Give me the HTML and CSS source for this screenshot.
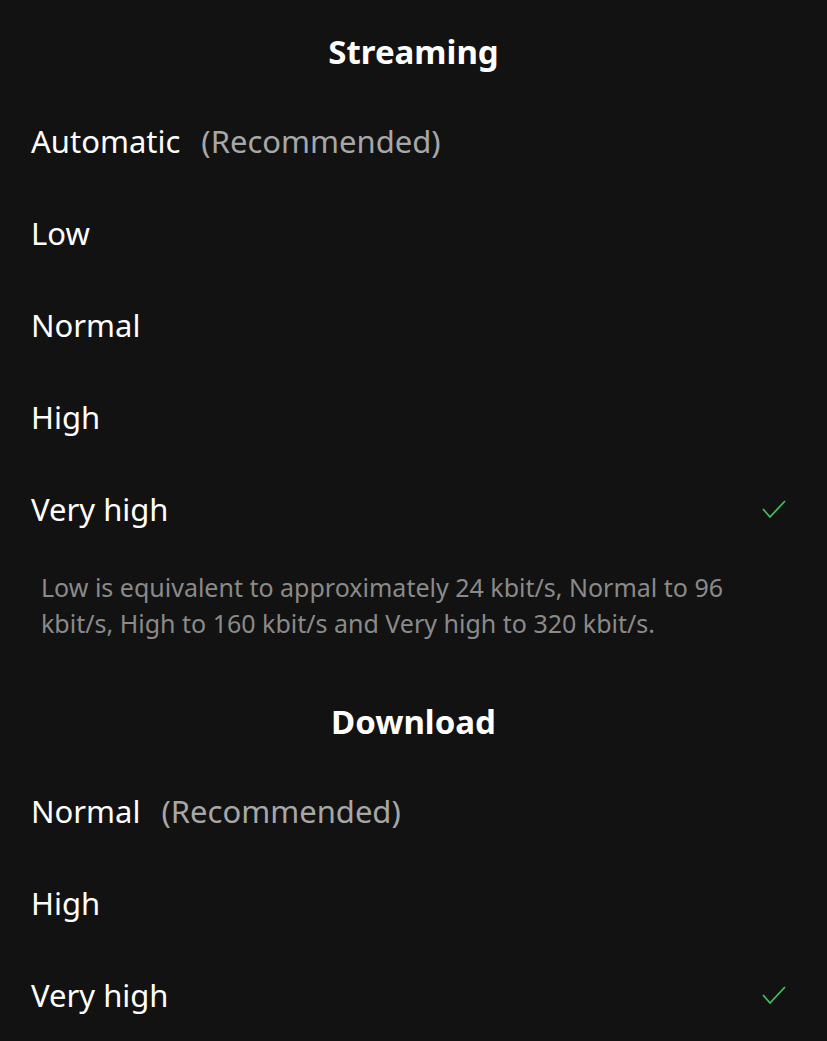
FILE: index.html
```html
<!DOCTYPE html>
<html lang="en">
<head>
<meta charset="UTF-8">
<meta name="viewport" content="width=device-width, initial-scale=1.0">
<title>Audio Quality</title>
<link rel="stylesheet" href="styles.css">
</head>
<body>
<div class="settings">
    <h2 class="section-title">Streaming</h2>
    <ul class="options">
        <li class="option">Automatic <span class="hint">(Recommended)</span></li>
        <li class="option">Low</li>
        <li class="option">Normal</li>
        <li class="option">High</li>
        <li class="option selected">Very high
            <svg class="check" width="26" height="20" viewBox="0 0 26 20"><path d="M2 10 L9 18 L24 2" fill="none" stroke="#3fbf5f" stroke-width="1.8"/></svg>
        </li>
    </ul>
    <p class="note">Low is equivalent to approximately 24 kbit/s, Normal to 96 kbit/s, High to 160 kbit/s and Very high to 320 kbit/s.</p>

    <h2 class="section-title">Download</h2>
    <ul class="options">
        <li class="option">Normal <span class="hint">(Recommended)</span></li>
        <li class="option">High</li>
        <li class="option selected">Very high
            <svg class="check" width="26" height="20" viewBox="0 0 26 20"><path d="M2 10 L9 18 L24 2" fill="none" stroke="#3fbf5f" stroke-width="1.8"/></svg>
        </li>
    </ul>
</div>
</body>
</html>
```

FILE: styles.css
```css
body {
    margin: 0;
    padding: 0;
    background-color: #121212;
    color: #ffffff;
    font-family: "Noto Sans", "Open Sans", sans-serif;
}
.settings {
    width: 827px;
}
.section-title {
    margin: 0;
    padding: 32px 0 23px;
    font-size: 33px;
    line-height: 40px;
    font-weight: 700;
    text-align: center;
}
.options {
    list-style: none;
    margin: 0;
    padding: 0;
}
.option {
    display: flex;
    align-items: center;
    height: 92px;
    padding: 0 40px 0 31px;
    font-size: 31px;
}
.hint {
    color: #a7a7a7;
    margin-left: 21px;
}
.check {
    margin-left: auto;
}
.note {
    margin: 0;
    padding: 14px 60px 29px 41px;
    font-size: 25px;
    line-height: 36px;
    color: #8a8a8a;
}
```
